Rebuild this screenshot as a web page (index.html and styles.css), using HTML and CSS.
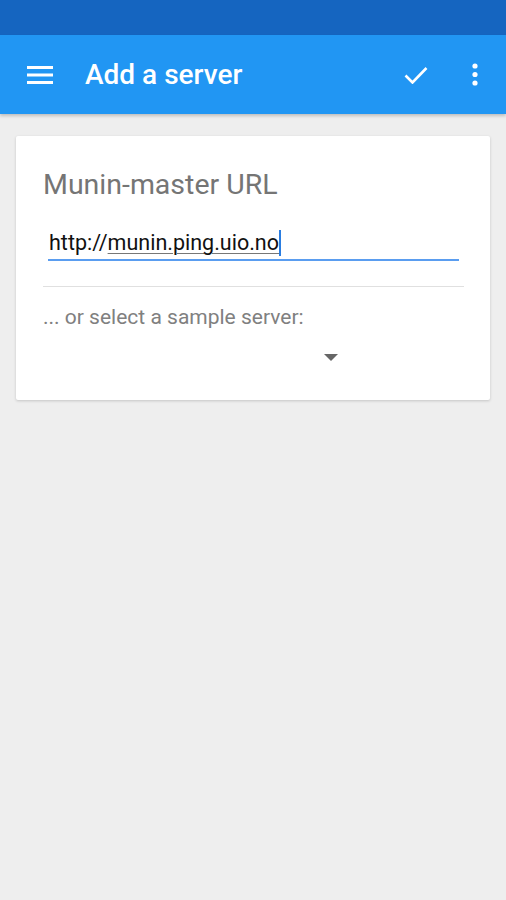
FILE: index.html
```html
<!DOCTYPE html>
<html lang="en">
<head>
    <meta charset="UTF-8">
    <meta name="viewport" content="width=device-width, initial-scale=1.0">
    <title>Add a server</title>
    <link rel="stylesheet" href="styles.css">
</head>
<body>
    <div class="status-bar"></div>

    <header class="app-bar">
        <svg class="icon menu" width="26" height="18" viewBox="0 0 26 18">
            <rect x="0" y="0" width="26" height="3" fill="#fff"/>
            <rect x="0" y="7.5" width="26" height="3" fill="#fff"/>
            <rect x="0" y="15" width="26" height="3" fill="#fff"/>
        </svg>
        <h1>Add a server</h1>
        <svg class="icon check" width="24" height="18" viewBox="0 0 24 18">
            <path d="M1.5 9.5L8.5 16.5L22.5 2" fill="none" stroke="#fff" stroke-width="2.6"/>
        </svg>
        <svg class="icon more" width="6" height="23" viewBox="0 0 6 23">
            <circle cx="3" cy="3" r="2.6" fill="#fff"/>
            <circle cx="3" cy="11.5" r="2.6" fill="#fff"/>
            <circle cx="3" cy="20" r="2.6" fill="#fff"/>
        </svg>
    </header>

    <div class="container">
        <div class="card">
            <h3>Munin-master URL</h3>
            <div class="url-field">
                <span class="prefix">http://</span><span class="host">munin.ping.uio.no</span><span class="cursor"></span>
            </div>
            <hr class="divider">
            <p class="hint">... or select a sample server:</p>
            <div class="spinner">
                <span class="arrow"></span>
            </div>
        </div>
    </div>
</body>
</html>
```

FILE: styles.css
```css
/* General Styling */
body {
    font-family: Roboto, "Noto Sans", sans-serif;
    margin: 0;
    padding: 0;
    background-color: #eeeeee;
}

.status-bar {
    height: 35px;
    background-color: #1565c0;
}

.app-bar {
    height: 79px;
    background-color: #2196f3;
    display: flex;
    align-items: center;
    padding: 0 28px 0 27px;
    box-shadow: 0 2px 3px rgba(0, 0, 0, 0.2);
}

.app-bar h1 {
    flex: 1;
    margin: 0 0 0 32px;
    color: white;
    font-size: 28px;
    font-weight: 500;
}

.icon {
    display: block;
}

.check {
    margin-right: 44px;
}

.container {
    padding: 22px 16px;
}

/* Card */
.card {
    background-color: white;
    border-radius: 2px;
    box-shadow: 0 1px 3px rgba(0, 0, 0, 0.18);
    padding: 32px 26px 17px 27px;
}

.card h3 {
    margin: 0;
    font-size: 28.5px;
    font-weight: 400;
    color: #757575;
    line-height: 34px;
}

.url-field {
    margin: 26px 5px 0 5px;
    padding: 0 0 1px 1px;
    border-bottom: 2px solid #5a9df0;
    font-size: 21.5px;
    line-height: 30px;
    color: #111;
    display: flex;
    align-items: center;
}

.host {
    text-decoration: underline;
    text-decoration-color: #777;
    text-decoration-thickness: 1px;
    text-underline-offset: 3px;
}

.cursor {
    display: inline-block;
    width: 2px;
    height: 26px;
    background-color: #2a7de1;
}

.divider {
    border: none;
    border-top: 1px solid #e0e0e0;
    margin: 25px 0 0 0;
}

.hint {
    margin: 16px 0 0 0;
    font-size: 21px;
    color: #808080;
    line-height: 28px;
}

.spinner {
    height: 52px;
    display: flex;
    align-items: center;
    padding-left: 281px;
}

.arrow {
    width: 0;
    height: 0;
    border-left: 7px solid transparent;
    border-right: 7px solid transparent;
    border-top: 7px solid #666;
}
```
